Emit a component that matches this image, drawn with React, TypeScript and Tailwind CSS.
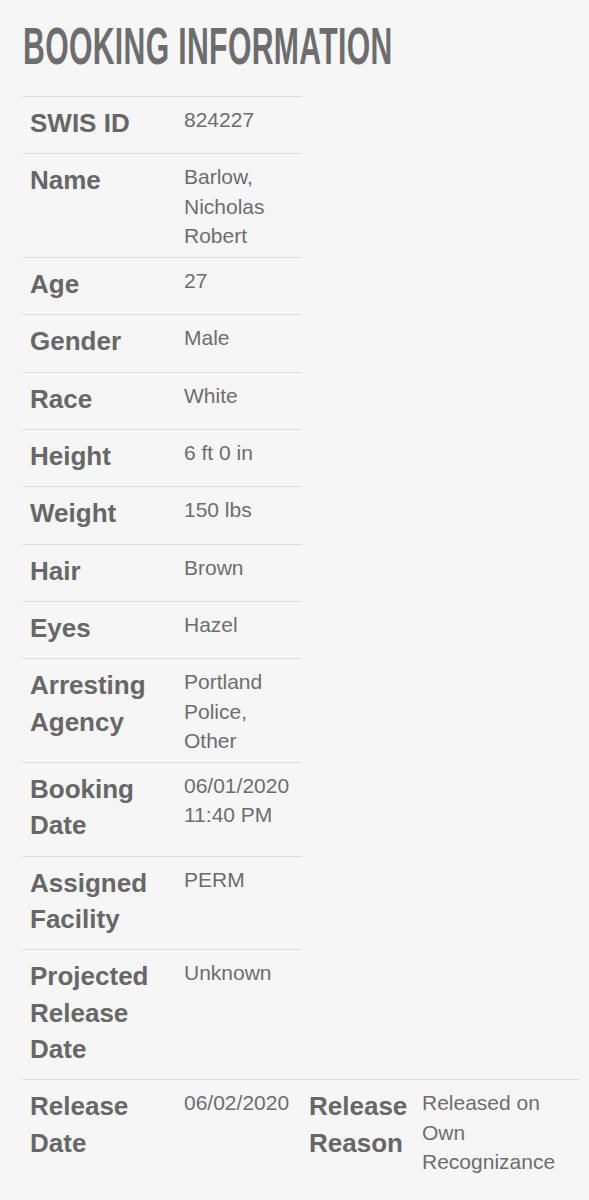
import React from "react";

const rows: [string, string][] = [
  ["SWIS ID", "824227"],
  ["Name", "Barlow, Nicholas Robert"],
  ["Age", "27"],
  ["Gender", "Male"],
  ["Race", "White"],
  ["Height", "6 ft 0 in"],
  ["Weight", "150 lbs"],
  ["Hair", "Brown"],
  ["Eyes", "Hazel"],
  ["Arresting Agency", "Portland Police, Other"],
  ["Booking Date", "06/01/2020 11:40 PM"],
  ["Assigned Facility", "PERM"],
  ["Projected Release Date", "Unknown"],
];

const labelCls =
  "px-[7px] pt-2 pb-3 text-[26px] leading-[36.3px] font-bold text-[#676767]";
const valueCls =
  "px-[7px] pt-2 pb-[7px] text-[21px] leading-[29.3px] text-[#6d6d6d]";

export default function App() {
  return (
    <div
      className="min-h-[1200px] w-[589px] overflow-hidden bg-[#f6f6f6] pl-[23px]"
      style={{ fontFamily: '"Liberation Sans", Arial, sans-serif' }}
    >
      <div className="pt-5 h-[96px]">
        <h1 className="inline-block origin-left scale-x-[0.58] whitespace-nowrap text-[52px] leading-none font-bold text-[#6d6d6d] tracking-[0.6px]">
          BOOKING INFORMATION
        </h1>
      </div>
      <div className="flex flex-col">
        {rows.map(([k, v]) => (
          <div key={k} className="flex w-[279px] border-t border-[#dcdcdc]">
            <div className={`w-[154px] shrink-0 ${labelCls}`}>{k}</div>
            <div className={`w-[125px] shrink-0 ${valueCls}`}>{v}</div>
          </div>
        ))}
        <div className="flex w-[556px] border-t border-[#dcdcdc]">
          <div className={`w-[154px] shrink-0 ${labelCls}`}>Release Date</div>
          <div className={`w-[125px] shrink-0 ${valueCls}`}>06/02/2020</div>
          <div className={`w-[113px] shrink-0 ${labelCls}`}>Release Reason</div>
          <div className={`w-[164px] shrink-0 ${valueCls}`}>
            Released on Own Recognizance
          </div>
        </div>
      </div>
    </div>
  );
}
